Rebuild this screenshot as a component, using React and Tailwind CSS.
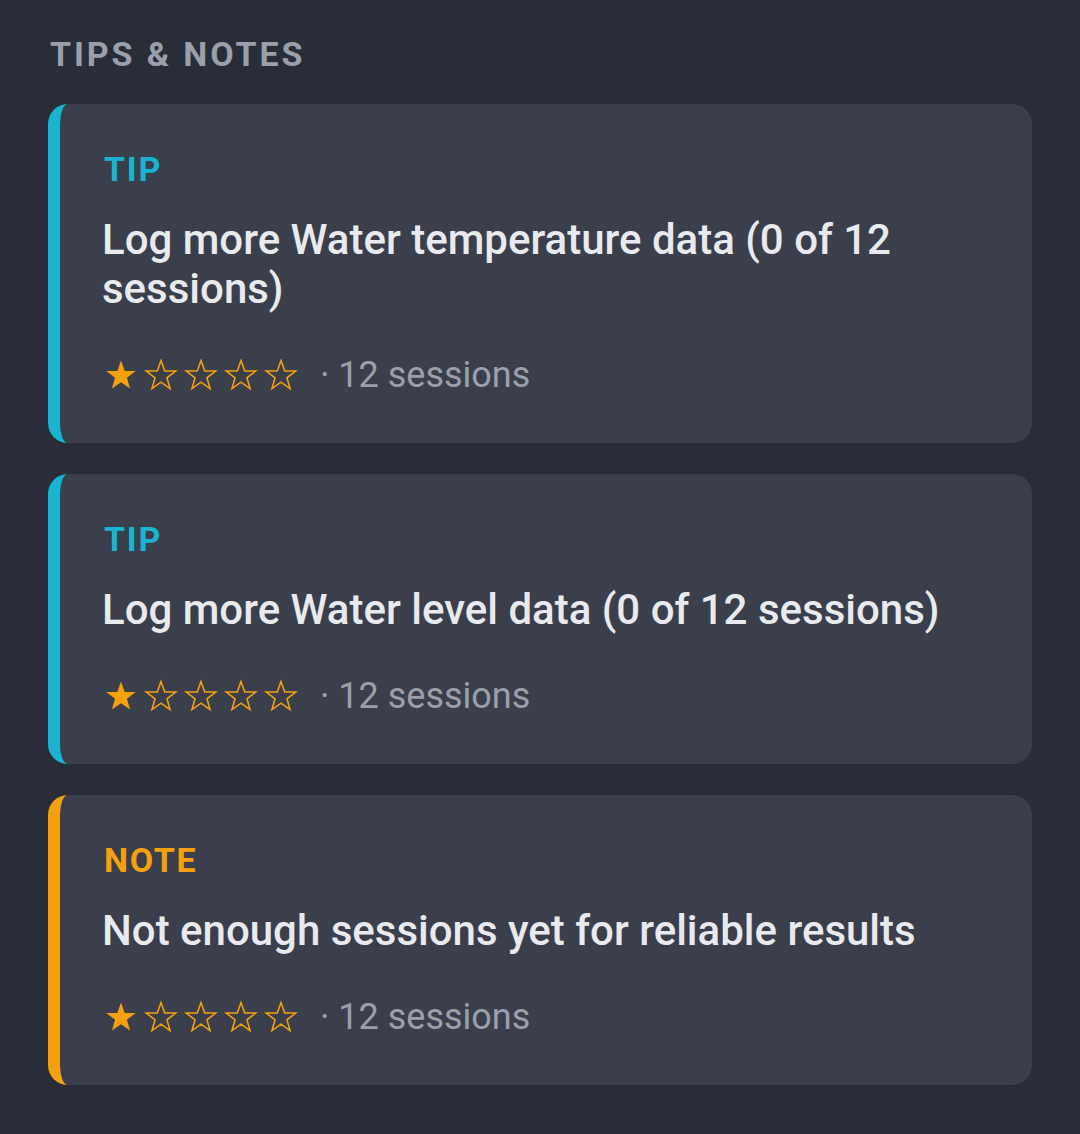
import React from "react";

const notes = [
  { kind: "TIP", text: "Log more Water temperature data (0 of 12 sessions)", rating: 1, sessions: 12 },
  { kind: "TIP", text: "Log more Water level data (0 of 12 sessions)", rating: 1, sessions: 12 },
  { kind: "NOTE", text: "Not enough sessions yet for reliable results", rating: 1, sessions: 12 },
];

const Star = ({ filled }) => (
  <svg width="34" height="34" viewBox="0 0 24 24" className="shrink-0">
    <polygon
      points="12,1.8 14.6,9.1 22.4,9.2 16.2,14 18.4,21.6 12,17.1 5.6,21.6 7.8,14 1.6,9.2 9.4,9.1"
      fill={filled ? "#f5a00f" : "none"}
      stroke="#f5a00f"
      strokeWidth={filled ? 0 : 1.1}
      strokeLinejoin="miter"
    />
  </svg>
);

function NoteCard({ note }) {
  const isTip = note.kind === "TIP";
  return (
    <div
      className={`rounded-[20px] bg-[#3a3f4b] border-l-[12px] pl-[44px] pr-10 pt-[45px] pb-[48px] ${
        isTip ? "border-[#18b4d2]" : "border-[#f5a00f]"
      }`}
    >
      <div
        className={`text-[34px] leading-[40px] font-bold tracking-[0.05em] ${
          isTip ? "text-[#18b4d2]" : "text-[#f5a00f]"
        }`}
      >
        {note.kind}
      </div>
      <div className="mt-[26px] -ml-[2px] text-[42px] leading-[49px] font-medium text-[#e8eaee]">
        {note.text}
      </div>
      <div className="mt-[42px] flex items-center gap-[6px]">
        {[1, 2, 3, 4, 5].map((i) => (
          <Star key={i} filled={i <= note.rating} />
        ))}
        <span className="ml-[16px] text-[36px] leading-[40px] text-[#9aa0ab]">
          · {note.sessions} sessions
        </span>
      </div>
    </div>
  );
}

export default function App() {
  return (
    <div
      className="min-h-[1134px] bg-[#292d38] px-12 pt-[34px]"
      style={{ fontFamily: "Roboto, 'Noto Sans', sans-serif" }}
    >
      <h2 className="text-[34px] leading-[40px] font-bold tracking-[0.085em] text-[#9aa0ab] pl-[2px]">
        TIPS &amp; NOTES
      </h2>
      <div className="mt-[30px] flex flex-col gap-[31px]">
        {notes.map((n, i) => (
          <NoteCard key={i} note={n} />
        ))}
      </div>
    </div>
  );
}
